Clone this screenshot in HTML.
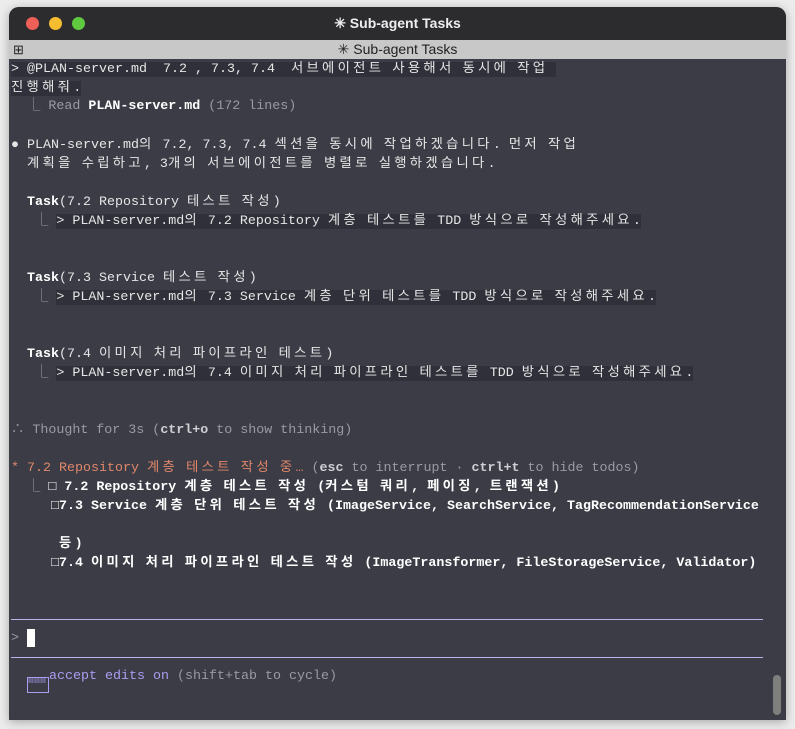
<!DOCTYPE html>
<html><head><meta charset="utf-8"><style>
html,body{margin:0;padding:0;width:795px;height:729px;background:#ececec;overflow:hidden}
.win{position:absolute;left:9px;top:7px;width:777px;height:713px;background:#3b3c46;border-radius:10px 10px 0 0;overflow:hidden;box-shadow:0 2px 10px rgba(0,0,0,.3)}
.tb{position:absolute;left:0;top:0;width:777px;height:33px;background:#2c2c2f;color:#eee;font:bold 14px "Liberation Sans",sans-serif;text-align:center;line-height:33px}
.dot{position:absolute;top:10px;width:13px;height:13px;border-radius:50%}
.tab{position:absolute;left:0;top:33px;width:777px;height:19px;background:#c8c8c8;color:#222;font:14px "Liberation Sans",sans-serif;text-align:center;line-height:19px}
.l{position:absolute;left:2px;height:19px;line-height:19px;font-family:"Liberation Mono","Noto Sans CJK KR",monospace;font-size:13.33px;color:#e6e6e6;white-space:pre}
k{letter-spacing:3.3px}
.g{color:#9a9aa2}.b{font-weight:bold;color:#fff}.o{color:#e0876a}.p{color:#ab9cf0}
.hl{background:#2f3039}
.hr{position:absolute;left:2px;width:752px;height:1px;background:#b8b4e8}
</style></head><body>
<div class="win">
<div class="tb"><div class="dot" style="left:17px;background:#ed5f57"></div><div class="dot" style="left:40px;background:#f5bd2f"></div><div class="dot" style="left:63px;background:#5fc93f"></div>✳ Sub-agent Tasks</div>
<div class="tab"><span style="position:absolute;left:4px;top:0;font-size:13px">⊞</span>✳ Sub-agent Tasks</div>

<div class="l" style="top:53px"><span class="hl">&gt; @PLAN-server.md  7.2 , 7.3, 7.4  <k>서브에이전트</k> <k>사용해서</k> <k>동시에</k> <k>작업</k> </span></div>
<div class="l" style="top:72px"><span class="hl"><k>진행해줘</k>.</span></div>
<div class="l" style="top:90px"><span class="g">  ⎿ Read </span><span class="b">PLAN-server.md</span><span class="g"> (172 lines)</span></div>

<div class="l" style="top:129px">● PLAN-server.md<k>의</k> 7.2, 7.3, 7.4 <k>섹션을</k> <k>동시에</k> <k>작업하겠습니다</k>. <k>먼저</k> <k>작업</k></div>
<div class="l" style="top:148px">  <k>계획을</k> <k>수립하고</k>, 3<k>개의</k> <k>서브에이전트를</k> <k>병렬로</k> <k>실행하겠습니다</k>.</div>

<div class="l" style="top:186px">  <span class="b">Task</span>(7.2 Repository <k>테스트</k> <k>작성</k>)</div>
<div class="l" style="top:205px"><span class="g">   ⎿ </span><span class="hl">&gt; PLAN-server.md<k>의</k> 7.2 Repository <k>계층</k> <k>테스트를</k> TDD <k>방식으로</k> <k>작성해주세요</k>.</span></div>

<div class="l" style="top:262px">  <span class="b">Task</span>(7.3 Service <k>테스트</k> <k>작성</k>)</div>
<div class="l" style="top:281px"><span class="g">   ⎿ </span><span class="hl">&gt; PLAN-server.md<k>의</k> 7.3 Service <k>계층</k> <k>단위</k> <k>테스트를</k> TDD <k>방식으로</k> <k>작성해주세요</k>.</span></div>

<div class="l" style="top:338px">  <span class="b">Task</span>(7.4 <k>이미지</k> <k>처리</k> <k>파이프라인</k> <k>테스트</k>)</div>
<div class="l" style="top:357px"><span class="g">   ⎿ </span><span class="hl">&gt; PLAN-server.md<k>의</k> 7.4 <k>이미지</k> <k>처리</k> <k>파이프라인</k> <k>테스트를</k> TDD <k>방식으로</k> <k>작성해주세요</k>.</span></div>

<div class="l g" style="top:414px">∴ Thought for 3s (<b style="color:#cfcfd4">ctrl+o</b> to show thinking)</div>

<div class="l" style="top:452px"><span class="o">* 7.2 Repository <k>계층</k> <k>테스트</k> <k>작성</k> <k>중</k>…</span><span class="g"> (<b style="color:#cfcfd4">esc</b> to interrupt · <b style="color:#cfcfd4">ctrl+t</b> to hide todos)</span></div>
<div class="l" style="top:471px"><span class="g">  ⎿ </span><span class="b">□ 7.2 Repository <k>계층</k> <k>테스트</k> <k>작성</k> (<k>커스텀</k> <k>쿼리</k>, <k>페이징</k>, <k>트랜잭션</k>)</span></div>
<div class="l" style="top:490px"><span class="b">     □7.3 Service <k>계층</k> <k>단위</k> <k>테스트</k> <k>작성</k> (ImageService, SearchService, TagRecommendationService</span></div>
<div class="l" style="top:528px"><span class="b">      <k>등</k>)</span></div>
<div class="l" style="top:547px"><span class="b">     □7.4 <k>이미지</k> <k>처리</k> <k>파이프라인</k> <k>테스트</k> <k>작성</k> (ImageTransformer, FileStorageService, Validator)</span></div>

<div class="hr" style="top:612px"></div>
<div class="l g" style="top:622px">&gt;</div>
<div style="position:absolute;left:18px;top:622px;width:8px;height:18px;background:#fff"></div>
<div class="hr" style="top:650px"></div>
<div class="l" style="top:660px">  <span class="p" style="display:inline-block;width:22px;height:16px;vertical-align:-4px;border:1px solid #ab9cf0;box-sizing:border-box;font-size:6px;line-height:7px;letter-spacing:0">▦▦▦</span><span class="p">accept edits on</span><span class="g"> (shift+tab to cycle)</span></div>

<div style="position:absolute;left:764px;top:668px;width:8px;height:40px;border-radius:4px;background:#7e7f7d"></div>
</div>
</body></html>
